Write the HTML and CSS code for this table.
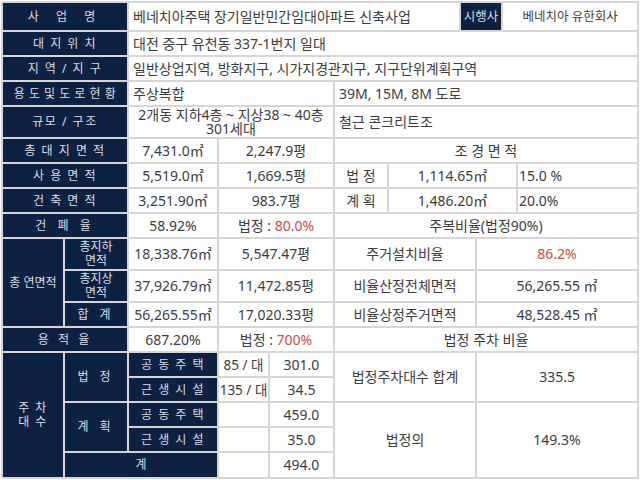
FILE: index.html
```html
<!DOCTYPE html>
<html lang="ko">
<head>
<meta charset="utf-8">
<title>사업 개요</title>
<link rel="stylesheet" href="styles.css">
</head>
<body>
<table class="sheet">
  <colgroup>
    <col class="k1"><col class="k2"><col class="k3"><col class="k4"><col class="k5"><col class="k6">
    <col class="k7"><col class="k8"><col class="k9"><col class="k10"><col class="k11">
  </colgroup>
  <tr class="r27">
    <th colspan="2" class="s4">사 업 명</th>
    <td colspan="5" class="left">베네치아주택 장기일반민간임대아파트 신축사업</td>
    <th colspan="2" class="mid">시행사</th>
    <td colspan="2" class="small">베네치아 유한회사</td>
  </tr>
  <tr class="r23">
    <th colspan="2" class="s1">대 지 위 치</th>
    <td colspan="9" class="left">대전 중구 유천동 337-1번지 일대</td>
  </tr>
  <tr class="r23">
    <th colspan="2" class="s1">지 역 / 지 구</th>
    <td colspan="9" class="left">일반상업지역, 방화지구, 시가지경관지구, 지구단위계획구역</td>
  </tr>
  <tr class="r23">
    <th colspan="2" class="s0">용 도 및 도 로 현 황</th>
    <td colspan="3" class="left">주상복합</td>
    <td colspan="6" class="left">39M, 15M, 8M 도로</td>
  </tr>
  <tr class="r30">
    <th colspan="2" class="s1">규모 / 구조</th>
    <td colspan="3" class="two"><span class="ln">2개동 지하4층 ~ 지상38 ~ 40층</span><span class="ln">301세대</span></td>
    <td colspan="6" class="left">철근 콘크리트조</td>
  </tr>
  <tr class="r23">
    <th colspan="2" class="s1">총 대 지 면 적</th>
    <td>7,431.0㎡</td>
    <td colspan="2">2,247.9평</td>
    <td colspan="6">조 경 면 적</td>
  </tr>
  <tr class="r23">
    <th colspan="2" class="s1">사 용 면 적</th>
    <td>5,519.0㎡</td>
    <td colspan="2">1,669.5평</td>
    <td>법 정</td>
    <td colspan="4">1,114.65㎡</td>
    <td class="tight">15.0 %</td>
  </tr>
  <tr class="r23">
    <th colspan="2" class="s1">건 축 면 적</th>
    <td>3,251.90㎡</td>
    <td colspan="2">983.7평</td>
    <td>계 획</td>
    <td colspan="4">1,486.20㎡</td>
    <td class="tight">20.0%</td>
  </tr>
  <tr class="r23">
    <th colspan="2" class="s2">건 폐 율</th>
    <td>58.92%</td>
    <td colspan="2">법정 : <span class="red">80.0%</span></td>
    <td colspan="6">주복비율(법정90%)</td>
  </tr>
  <tr class="r30">
    <th rowspan="3">총 연면적</th>
    <th class="two"><span class="ln">총지하</span><span class="ln">면적</span></th>
    <td>18,338.76㎡</td>
    <td colspan="2">5,547.47평</td>
    <td colspan="3">주거설치비율</td>
    <td colspan="3" class="red">86.2%</td>
  </tr>
  <tr class="r30">
    <th class="two"><span class="ln">총지상</span><span class="ln">면적</span></th>
    <td>37,926.79㎡</td>
    <td colspan="2">11,472.85평</td>
    <td colspan="3">비율산정전체면적</td>
    <td colspan="3">56,265.55 ㎡</td>
  </tr>
  <tr class="r23">
    <th class="s2">합 계</th>
    <td>56,265.55㎡</td>
    <td colspan="2">17,020.33평</td>
    <td colspan="3">비율상정주거면적</td>
    <td colspan="3">48,528.45 ㎡</td>
  </tr>
  <tr class="r23">
    <th colspan="2" class="s3">용 적 율</th>
    <td>687.20%</td>
    <td colspan="2">법정 : <span class="red">700%</span></td>
    <td colspan="6">법정 주차 비율</td>
  </tr>
  <tr class="r23">
    <th rowspan="5" class="two s1"><span class="ln">주 차</span><span class="ln">대 수</span></th>
    <th rowspan="2" class="s2">법 정</th>
    <th class="s1">공 동 주 택</th>
    <td class="unit">85 / 대</td>
    <td>301.0</td>
    <td colspan="3" rowspan="2">법정주차대수 합계</td>
    <td colspan="3" rowspan="2">335.5</td>
  </tr>
  <tr class="r23">
    <th class="s1">근 생 시 설</th>
    <td class="unit">135 / 대</td>
    <td>34.5</td>
  </tr>
  <tr class="r23">
    <th rowspan="2" class="s2">계 획</th>
    <th class="s1">공 동 주 택</th>
    <td></td>
    <td>459.0</td>
    <td colspan="3" rowspan="3">법정의</td>
    <td colspan="3" rowspan="3">149.3%</td>
  </tr>
  <tr class="r23">
    <th class="s1">근 생 시 설</th>
    <td></td>
    <td>35.0</td>
  </tr>
  <tr class="r24">
    <th colspan="2">계</th>
    <td></td>
    <td>494.0</td>
  </tr>
</table>
</body>
</html>
```

FILE: styles.css
```css
html, body {
  margin: 0;
  padding: 0;
  background: #ffffff;
}

body {
  font-family: "Noto Sans", "Noto Sans CJK KR", sans-serif;
}

.sheet {
  margin: 1px 0 0 1px;
  width: 638px;
  table-layout: fixed;
  border-collapse: separate;
  border-spacing: 2px;
  background: #d6d6d6;
}

.k1 { width: 60px; }
.k2 { width: 62px; }
.k3 { width: 88px; }
.k4 { width: 49px; }
.k5 { width: 63px; }
.k6 { width: 52px; }
.k7 { width: 70px; }
.k8 { width: 14px; }
.k9 { width: 24px; }
.k10 { width: 13px; }
.k11 { width: 119px; }

.r23 { height: 23px; }
.r24 { height: 24px; }
.r27 { height: 27px; }
.r30 { height: 30px; }

th, td {
  padding: 0;
  text-align: center;
  vertical-align: middle;
  white-space: nowrap;
  line-height: 16px;
}

th {
  background: #0c2240;
  color: #d9dee6;
  font-size: 12px;
  font-weight: normal;
}

td {
  background: #ffffff;
  color: #3c3c3c;
  font-size: 14px;
}

.left {
  text-align: left;
  padding-left: 4px;
}

.tight {
  text-align: left;
  padding-left: 1px;
}

.small {
  font-size: 12.5px;
}

.mid {
  font-size: 12.5px;
}

.unit {
  font-size: 13.5px;
}

.two {
  line-height: 14px;
}

.ln {
  display: block;
  line-height: 14px;
}

.red {
  color: #cc4b4b;
}

.s0 { letter-spacing: 0.5px; }
.s1 { letter-spacing: 1.5px; }
.s2 { letter-spacing: 4px; }
.s3 { letter-spacing: 3px; }
.s4 { letter-spacing: 7px; }
```
